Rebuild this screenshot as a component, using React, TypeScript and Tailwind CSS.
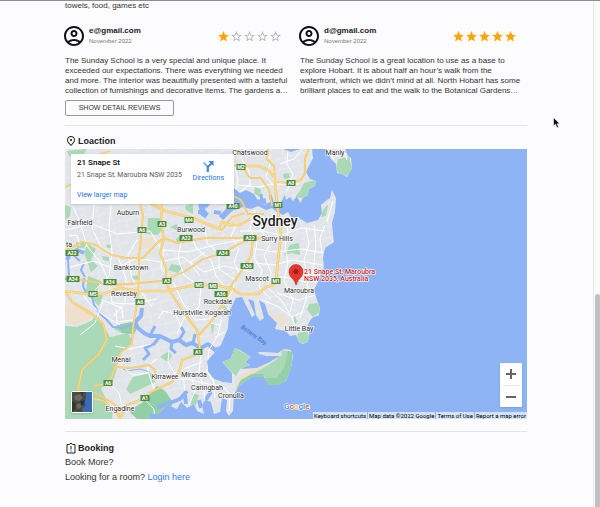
import React from "react";
import { MdOutlineAccountCircle, MdOutlinePlace, MdStar, MdStarBorder } from "react-icons/md";

type Review = { email: string; date: string; rating: number; lines: string[] };

const reviews: Review[] = [
  {
    email: "e@gmail.com",
    date: "November 2022",
    rating: 1,
    lines: [
      "The Sunday School is a very special and unique place. It",
      "exceeded our expectations. There was everything we needed",
      "and more. The interior was beautifully presented with a tasteful",
      "collection of furnishings and decorative items. The gardens a…",
    ],
  },
  {
    email: "d@gmail.com",
    date: "November 2022",
    rating: 5,
    lines: [
      "The Sunday School is a great location to use as a base to",
      "explore Hobart. It is about half an hour’s walk from the",
      "waterfront, which we didn’t mind at all. North Hobart has some",
      "brilliant places to eat and the walk to the Botanical Gardens…",
    ],
  },
];

function Rating({ value }: { value: number }) {
  return (
    <div className="flex" role="img" aria-label={`${value} Stars`}>
      {[1, 2, 3, 4, 5].map((n) =>
        n <= value ? (
          <MdStar key={n} className="size-[13px] text-[#faa500]" />
        ) : (
          <MdStarBorder key={n} className="size-[13px] text-[#b5b5b5]" />
        ),
      )}
    </div>
  );
}

function ReviewCard({ review }: { review: Review }) {
  return (
    <article className="min-w-0">
      <header className="flex items-center">
        <MdOutlineAccountCircle className="-ml-[3px] size-6 shrink-0 text-[#111]" />
        <div className="ml-[3px] flex-1">
          <h3 className="text-[8px] leading-[10px] font-bold text-[#222]">{review.email}</h3>
          <p className="text-[6px] leading-[10px] text-[#777]">{review.date}</p>
        </div>
        <Rating value={review.rating} />
      </header>
      <p className="mt-2 text-[8px] leading-[10px] whitespace-nowrap">
        {review.lines.map((line) => (
          <span key={line} className="block">
            {line}
          </span>
        ))}
      </p>
    </article>
  );
}

const LAND =
  "M65 149H283L291 152L300 149H312L313 158L309 166L306 172L310 179L316 181L315 186L309 189L308 195L303 198L300 203L297 196L293 201L290 197L286 200L285 195L281 202L276 206L271 201L265 205L259 202L254 194L246 190L240 193L234 188L229 193L234 199L228 207L235 210L243 207L251 209L258 206L266 210L272 208L277 212L283 215L288 212L292 219L299 218L307 223L318 220L322 213L321 205L327 200L330 198L332 190L336 198L335 212L332 223L333 235L334 242L325 248L323 258L324 267L320 274L318 282L314 290L317 300L320 308L319 315L312 318L308 324L309 334L308 342L303 344L299 342L296 335L290 336L286 331L275 329L277 323L268 314L265 304L259 300L264 318L260 321L256 315L254 301L248 299L255 315L252 317L247 307L242 297L236 298L229 312L228 328L221 345L215 352L207 361L208 371L214 379L223 382L232 383L232 373L222 362L230 359L235 348L240 350L251 357L245 362L250 365L240 369L257 368L270 362L273 360L280 356L267 356L259 354L258 352L278 353L284 349L291 350L293 356L291 368L286 381L277 385L269 385L264 377L252 377L240 385L234 394L233 411L229 416L226 411L227 400L222 398L220 412L214 414L211 402L205 400L202 405L204 414L197 411L194 404L187 408L181 402L177 409L167 405L158 414L151 413L148 420H65ZM327 149H345L348 156L351 158L352 168L347 177L342 174L337 173L336 164L331 159Z";

const GREEN = [
  "M65 326L77 327L91 321L97 315L103 325L110 337L128 333L133 342L120 353L116 372L112 383L101 388L107 402L113 410L112 420H65Z",
  "M150 394L157 386L165 391L172 401L171 420H138L129 411L142 403Z",
  "M160 357L169 351L172 356L168 362ZM133 377L151 373L155 382L143 388L130 394L126 389Z",
  "M148 218L160 218L165 226L158 235L147 234Z",
  "M171 264L183 266L178 273L168 270ZM65 205L71 207L70 216L65 220Z",
  "M88 244L96 249L91 260L98 266L91 272L84 252ZM76 242L87 242L84 248L77 248Z",
  "M88 276L101 281L97 291L103 296L99 306L90 297L86 290Z",
  "M120 194L136 198L133 203L120 202ZM67 151L87 149L80 160L69 156Z",
  "M304 183L316 180L315 186L309 189L308 195L303 199L296 196L300 191Z",
  "M338 159L349 157L352 168L348 176L339 174L336 169Z",
  "M309 304L319 303L320 312L313 317L307 310ZM298 333L308 331L308 343L301 343L297 339Z",
  "M290 245L299 243L300 255L292 253L284 255ZM283 174L289 173L290 178L284 179Z",
  "M222 362L230 359L235 348L251 357L245 362L250 365L240 369L236 376L231 371Z",
  "M236 390L241 380L260 370L276 360L283 350L292 352L291 370L284 383L265 385L262 377L248 380Z",
  "M293 277L301 280L296 286ZM294 314L297 321L294 327ZM321 217L323 210L328 204L326 216Z",
  "M255 186L261 190L260 197L254 193ZM245 202L250 202L249 207L245 206ZM226 200L232 200L229 205Z",
  "M211 323L215 323L212 335ZM220 313L224 305L228 310L222 318ZM190 404L193 393L199 395L195 407Z",
  "M117 325L132 322L138 326L134 334L122 333L114 329Z",
  "M185 206L193 203L193 214L186 210ZM176 238L181 237L182 243L177 244ZM132 276L140 275L140 280L132 279Z",
  "M170 227L177 224L178 231ZM102 256L109 257L109 261L103 260ZM106 245L112 244L112 248L107 248Z",
];

const SAND = [
  "M65 305L80 304L95 314L88 321L74 325L66 322Z",
  "M268 308L275 316L284 314L288 321L278 330L280 320L271 318Z",
  "M234 391L240 376L247 371L268 364L266 370L248 376L239 388Z",
  "M190 198L200 195L202 202L190 204ZM141 239L155 236L152 246L140 250Z",
  "M230 222L238 215L243 219L236 226Z",
];

const WATERWAYS = [
  { d: "M225 346L215 350L208 344L201 348L192 343L186 345L179 340L172 342L160 336L150 336L144 333L138 328L135 322L141 316L142 308", w: 4 },
  { d: "M138 328L130 325L123 328L113 327L106 319L100 314L94 305L92 297L86 293L83 286L84 278", w: 2 },
  { d: "M160 336L154 344L145 348L149 354L143 360M179 340L184 332L181 327M172 341L171 349L176 353M193 344L195 334M150 336L155 326", w: 3 },
  { d: "M67 260L70 253L77 250L84 253", w: 4 },
  { d: "M72 254L80 261M68 260L69 275L65 280M85 277L81 270L84 263", w: 2 },
  { d: "M201 203L203 213L207 216M221 218L228 211L233 207L243 203", w: 6 },
  { d: "M205 207L210 201M198 212L207 213M214 212L221 213", w: 4 },
  { d: "M123 369L128 371L140 369L150 372", w: 1 },
  { d: "M157 407L167 404L180 399L187 391M186 404L185 395M201 408L199 400M205 401L211 392", w: 4 },
  { d: "M242 202L250 199L258 203L266 201M236 196L246 196L254 199", w: 6 },
  { d: "M262 202L261 194M273 205L270 195", w: 3 },
];

const STREETS = [
  "M65 230L92 224L118 234L150 231L162 250L188 252L219 244L247 239",
  "M73 206L80 222L87 246L100 262L109 282L112 303L132 304L157 299",
  "M94 204L92 228L101 247L118 257L126 279L125 303L113 317",
  "M111 205L109 227L112 252L109 276L95 290M137 240L128 255L132 278L152 307",
  "M70 267L94 261L114 269L137 258L160 262L183 257L204 272L224 266L252 272",
  "M164 249L161 268L174 284L183 303L195 320L208 319L225 308",
  "M181 243L178 258L184 275L201 287L199 307L184 318L177 334",
  "M205 228L207 243L219 253L219 269L235 280L232 292L222 306",
  "M191 236L197 249L211 260L216 276L226 288M237 223L231 236L239 249L234 262L240 275",
  "M255 210L250 228L257 243L254 258L262 270L259 287L271 299",
  "M264 216L262 231L270 244L264 256L271 272L268 288L282 301L291 316L296 327",
  "M240 231L262 231L281 235L302 228L325 231M251 248L274 252L302 249L323 253",
  "M255 263L274 265L293 260L322 265M269 278L284 277L306 282L317 281M277 293L298 300L315 295",
  "M285 217L288 232L285 244L288 263L284 280L293 300L290 312M306 228L309 244L304 260L308 280L306 300L300 318",
  "M314 226L316 243L314 261L313 276M325 225L320 238L322 252M333 201L327 222",
  "M158 319L163 311L175 314L181 326M116 309L117 322L133 320M102 300L122 308L123 318",
  "M169 350L168 362L175 374L186 368L202 362M172 380L187 379L199 382L224 387L230 395L229 411",
  "M157 359L147 366L150 378L154 389M182 367L185 391M201 354L199 372L204 389L205 409M213 378L215 398M191 374L195 391L189 405",
  "M121 365L132 375L148 373M110 384L119 393L122 407L112 407M144 399L154 409L155 420",
  "M222 316L218 335L209 350L207 371L217 388M219 325L209 323M215 337L225 332",
  "M245 149L241 158L249 171L250 185L239 192M266 149L270 164L266 177L277 189M288 149L287 164L293 174L287 191M302 150L294 159L280 164",
  "M234 163L238 180L234 196M238 185L258 187L273 184L299 184M327 149L334 160M343 149L347 160",
  "M80 335L95 323L103 302M115 346L130 349L151 344M262 300L277 306L292 317L303 312",
  "M65 290L83 294L88 302L103 315L120 325M69 236L77 235L80 246M205 252L190 263L200 276",
];

const HIGHWAYS = [
  { d: "M65 291L88 294L103 294L120 288L139 291L165 291L190 286L205 285L220 286L233 289L240 294L258 294L266 287L276 284", w: 2 },
  { d: "M150 203L165 211L181 215L193 218L205 223L214 227L219 229L222 222L230 225L240 225L250 219", w: 2 },
  { d: "M276 284L277 270L279 251L281 234L279 218L277 203L275 185L275 178L268 170L259 166L242 166L234 165", w: 2 },
  { d: "M309 149L305 158L305 173L301 180L290 183L277 182M268 149L267 159L274 166L275 177", w: 1.4 },
  { d: "M140 203L143 215L141 236L139 257L139 278L137 304L133 327L132 344L121 352L115 368L109 383L94 386", w: 1.4 },
  { d: "M162 203L161 224L164 238L160 253L166 268L166 282L171 293L184 313L197 330L200 350L193 356L182 360L180 370L172 382L151 392L145 398L127 405L120 419", w: 1.6 },
  { d: "M65 251L82 242L96 245L112 255L126 258L143 258L158 242L164 238L177 243L205 238L225 238L248 238L268 239", w: 1.4 },
  { d: "M65 277L88 281L111 285L129 284L161 281L184 272L203 259L223 253L239 244L253 238", w: 1.2 },
  { d: "M253 239L251 256L242 270L231 286L225 301L210 323L198 336", w: 1.6 },
  { d: "M65 291L72 302L92 314L103 324L107 339L99 354L82 370L78 389L87 397L104 401L119 416", w: 1.6 },
  { d: "M119 418L120 408L109 401L94 392M116 367L131 368L149 365L155 370L155 380", w: 1.2 },
  { d: "M228 193L241 200L248 214L264 214M242 166L250 178L261 178L269 190L272 206", w: 1.2 },
  { d: "M65 187L72 184M92 157L110 151M205 223L222 230L232 217L245 213", w: 1.2 },
];

const SHIELDS: [string, number, number][] = [
  ["A40", 233, 206], ["M4", 189, 220], ["A3", 162, 224], ["A6", 142, 230], ["A22", 186, 238],
  ["A34", 223, 253], ["A22", 72, 253], ["M2", 241, 167], ["A8", 291, 183], ["M1", 278, 205],
  ["A22", 250, 238], ["A36", 247, 266], ["M1", 276, 281], ["M8", 213, 286], ["M5", 199, 285],
  ["A34", 73, 279], ["A34", 110, 282], ["A3", 167, 281], ["M5", 93, 294], ["A6", 140, 302],
  ["A36", 221, 294], ["A1", 198, 352], ["A6", 108, 383], ["A1", 145, 398],
];

const PLACES: [string, number, number][] = [
  ["Chatswood", 250, 155], ["Manly", 335, 155], ["Auburn", 128, 215], ["Fairfield", 80, 225],
  ["Burwood", 191, 232], ["ta", 69, 247], ["Bankstown", 131, 270], ["Surry Hills", 277, 241],
  ["Mascot", 257, 281], ["Revesby", 124, 296], ["Rockdale", 218, 304], ["Hurstville", 188, 315],
  ["Kogarah", 218, 315], ["Maroubra", 299, 293], ["Little Bay", 299, 331], ["Menai", 121, 362],
  ["Kirrawee", 165, 379], ["Miranda", 194, 377], ["Caringbah", 207, 390], ["Cronulla", 231, 398],
  ["Engadine", 120, 411],
];

function MapDrawing() {
  return (
    <svg
      className="block h-full w-full font-[Roboto,sans-serif]"
      viewBox="65 149 462 270"
      preserveAspectRatio="xMinYMin slice"
      role="img"
      aria-label="Map of Sydney"
    >
      <defs>
        <clipPath id="land">
          <path d={LAND} />
        </clipPath>
        <pattern id="blocks" width="13" height="11" patternUnits="userSpaceOnUse" patternTransform="rotate(-14)">
          <path d="M0 2H13M4 2V11M10 0V2M0 8H4" stroke="#eff1f3" strokeWidth="0.6" fill="none" />
        </pattern>
      </defs>
      <rect x="65" y="149" width="462" height="270" fill="#8eb4f6" />
      <path d={LAND} fill="#e1e4e8" />
      <g clipPath="url(#land)">
        <path d={LAND} fill="url(#blocks)" />
        {SAND.map((d) => (
          <path key={d} d={d} fill="#eee0cd" />
        ))}
        {GREEN.map((d) => (
          <path key={d} d={d} fill="#a9d9b6" />
        ))}
        <path d="M150 394L157 386L165 391L172 401L171 420H138L129 411L142 403ZM117 325L132 322L138 326L134 334L122 333Z" fill="#92cea6" />
        <path d="M236 390L241 380L252 374L263 374L264 378L277 378L285 366L288 351L293 352L291 370L284 385H265L262 379L248 381Z" fill="#93cfa7" />
        <path d="M258 352L281 352L282 355L274 359L267 356Z" fill="#dfe2e6" />
        <g fill="none" stroke="#8eb4f6" strokeLinejoin="round">
          {WATERWAYS.map((r) => (
            <path key={r.d} d={r.d} strokeWidth={r.w} />
          ))}
        </g>
        <g fill="none" stroke="#ffffff" strokeWidth="1" strokeLinejoin="round">
          {STREETS.map((d) => (
            <path key={d} d={d} />
          ))}
        </g>
      </g>
      <g fill="none" stroke="#f5c667" strokeLinejoin="round">
        {HIGHWAYS.map((r) => (
          <path key={r.d} d={r.d} strokeWidth={r.w + 0.6} />
        ))}
      </g>
      <g fill="none" stroke="#fddc8d" strokeLinejoin="round">
        {HIGHWAYS.map((r) => (
          <path key={r.d} d={r.d} strokeWidth={r.w - 0.6} />
        ))}
      </g>
      {SHIELDS.map(([name, x, y]) => (
        <g key={`${name}-${x}-${y}`}>
          <rect x={x - name.length * 2 - 0.5} y={y - 3} width={name.length * 4 + 1} height="6" rx="0.5" fill="#4c8b3b" />
          <text x={x} y={y + 2} fontSize="5" fontWeight="700" fill="#fff" textAnchor="middle">
            {name}
          </text>
        </g>
      ))}
      <g fontSize="7" fill="#2b2b2b" stroke="#fff" strokeWidth="1.2" paintOrder="stroke" textAnchor="middle">
        {PLACES.map(([name, x, y]) => (
          <text key={name} x={x} y={y}>
            {name}
          </text>
        ))}
      </g>
      <text x="275" y="226" fontSize="14" fontWeight="500" fill="#1c1c1c" stroke="#fff" strokeWidth="2" paintOrder="stroke" textAnchor="middle">
        Sydney
      </text>
      <text x="254" y="337" fontSize="6" fontWeight="500" fill="#4a7cd0" textAnchor="middle" transform="rotate(35 254 335)">
        Botany Bay
      </text>
      <path d="M296 285C295 279 289 278 289 271.500A7 7 0 0 1 303 271.500C303 278 297 279 296 285Z" fill="#e5372f" stroke="#b92a25" strokeWidth="0.6" />
      <circle cx="296" cy="271.500" r="2.600" fill="#a51c18" />
      <g fontSize="7" fontWeight="500" fill="#c5221f" stroke="#fff" strokeWidth="1.2" paintOrder="stroke">
        <text x="304" y="274">21 Snape St, Maroubra</text>
        <text x="304" y="281">NSW 2035, Australia</text>
      </g>
      <text x="284" y="409" fontSize="8" fontWeight="500" stroke="#fff" strokeWidth="1.2" paintOrder="stroke">
        <tspan fill="#4285f4">G</tspan>
        <tspan fill="#ea4335">o</tspan>
        <tspan fill="#fbbc04">o</tspan>
        <tspan fill="#4285f4">g</tspan>
        <tspan fill="#34a853">l</tspan>
        <tspan fill="#ea4335">e</tspan>
      </text>
    </svg>
  );
}

function SatelliteThumbnail() {
  return (
    <svg viewBox="0 0 20 20" className="block size-5" aria-hidden="true">
      <rect width="20" height="20" fill="#4a4f49" />
      <path d="M0 0H13L11 3L14 6L12 10L14 13L10 17L11 20H0Z" fill="#4b4a43" />
      <path d="M2 4L8 2L11 6L7 9L3 8ZM4 13L9 11L10 15L6 17Z" fill="#6d685d" />
      <path d="M0 9L4 11L3 17L0 20ZM8 0L12 0L10 3Z" fill="#30372f" />
      <path d="M14 0H20V20H11L10 17L14 13L12 10L14 6Z" fill="#3a6cb4" />
      <path d="M8 9L13 8L12 12L9 14Z" fill="#24364f" />
    </svg>
  );
}

function LocationMap() {
  return (
    <div className="relative mt-[2px] h-[270px] overflow-hidden font-[Roboto,sans-serif]">
      <MapDrawing />

      <div className="absolute top-[5px] left-[6px] flex h-[50px] w-[163px] justify-between bg-white pt-[4px] pr-[10px] pl-[6px] shadow-sm">
        <div className="whitespace-nowrap">
          <h3 className="text-[8px] leading-[10px] font-medium text-black">21 Snape St</h3>
          <p className="mt-[2px] text-[7px] leading-[10px] text-[#5b5b5b]">21 Snape St, Maroubra NSW 2035</p>
          <a href="#map" className="mt-[10px] block text-[7px] leading-[10px] text-[#1a73e8]">
            View larger map
          </a>
        </div>
        <a href="#directions" className="flex flex-col items-center text-[7px] leading-[10px] text-[#1a73e8]">
          <svg viewBox="0 0 12 12" className="mt-[2px] mb-px size-3" aria-hidden="true" fill="none">
            <path d="M1.500 2.500L5.800 7V12" stroke="#8ab4f8" strokeWidth="2" />
            <path d="M5.800 12V7L9.500 3.200" stroke="#4286e8" strokeWidth="2" />
            <path d="M6.500 1H11.500V6Z" fill="#4286e8" />
          </svg>
          Directions
        </a>
      </div>

      <button
        type="button"
        aria-label="Show satellite imagery"
        className="absolute bottom-[6px] left-[6px] rounded-[2px] border border-white bg-white shadow"
      >
        <SatelliteThumbnail />
      </button>

      <div className="absolute right-[5px] bottom-[12px] flex w-[22px] flex-col items-center rounded-[1px] bg-white shadow">
        <button type="button" aria-label="Zoom in" className="flex h-[22px] w-full items-center justify-center">
          <svg viewBox="0 0 10 10" className="size-[10px]" aria-hidden="true">
            <path d="M5 0V10M0 5H10" stroke="#666" strokeWidth="2" />
          </svg>
        </button>
        <div className="h-px w-4 bg-[#e6e6e6]" />
        <button type="button" aria-label="Zoom out" className="flex h-[21px] w-full items-center justify-center">
          <svg viewBox="0 0 10 10" className="size-[10px]" aria-hidden="true">
            <path d="M0 5H10" stroke="#666" strokeWidth="2" />
          </svg>
        </button>
      </div>

      <div className="absolute right-0 bottom-0 flex gap-px text-[6px] leading-[7px] whitespace-nowrap text-black">
        <button type="button" className="bg-[#d5e3f8] px-px">Keyboard shortcuts</button>
        <span className="bg-[#d5e3f8] px-px">Map data ©2022 Google</span>
        <a href="#terms" className="bg-[#d5e3f8] px-px">Terms of Use</a>
        <a href="#report" className="bg-[#d5e3f8] px-px">Report a map error</a>
      </div>
    </div>
  );
}

function BookingIcon() {
  return (
    <svg viewBox="0 0 12 12" className="size-3" aria-hidden="true" fill="none" stroke="#222">
      <path d="M2 2.500H4.500M7.500 2.500H10V11H2V2.500M4.500 2.500C4.500 1 7.500 1 7.500 2.500" />
      <path d="M6 4V7.500M6 8.500V9.500" />
    </svg>
  );
}

export default function App() {
  return (
    <div className="relative flex min-h-screen border-t border-[#8f8f92] bg-[#fcfbfe] font-['Liberation_Sans',Arial,sans-serif] text-[#333]">
      <main className="min-w-0 flex-1 pr-[66px] pl-[65px]">
        <p className="text-[8px] leading-[10px]">towels, food, games etc</p>

        <section className="mt-[13px] grid grid-cols-2 gap-[18px] pr-[10px]">
          {reviews.map((review) => (
            <ReviewCard key={review.email} review={review} />
          ))}
        </section>
        <button
          type="button"
          className="mt-[4px] block h-4 w-[109px] rounded-[2px] border border-[#999] text-[7px] leading-[14px]"
        >
          SHOW DETAIL REVIEWS
        </button>

        <section className="mt-[9px] border-t border-[#e4e4e6] pt-[9px]">
          <h2 className="flex items-center text-[9px] leading-3 font-bold text-[#222]">
            <MdOutlinePlace className="mr-px size-3" />
            Loaction
          </h2>
          <LocationMap />
        </section>

        <section className="mt-3 border-t border-[#e4e4e6] pt-[10px]">
          <h2 className="flex items-center gap-px text-[9px] leading-3 font-bold text-[#222]">
            <BookingIcon />
            Booking
          </h2>
          <p className="mt-[2px] text-[9px] leading-3">Book More?</p>
          <p className="mt-[3px] text-[9px] leading-3">
            Looking for a room?{" "}
            <a href="#login" className="text-[#2f80ee]">
              Login here
            </a>
          </p>
        </section>
      </main>

      <div className="flex w-[7px] flex-col border-l border-[#e8e8ea] bg-[#fafafa] pl-px" aria-hidden="true">
        <div className="flex-[293]" />
        <div className="flex-[213] rounded-t-[3px] bg-[#c1c1c3]" />
      </div>

      <svg viewBox="0 0 8 12" className="absolute top-[116px] left-[553px] h-3 w-2" aria-hidden="true">
        <path d="M0.500 0.500V9L2.500 7.200L4 10.800L5.500 10.200L4.200 6.800H6.800Z" fill="#111" stroke="#fff" strokeWidth="0.6" />
      </svg>
    </div>
  );
}
